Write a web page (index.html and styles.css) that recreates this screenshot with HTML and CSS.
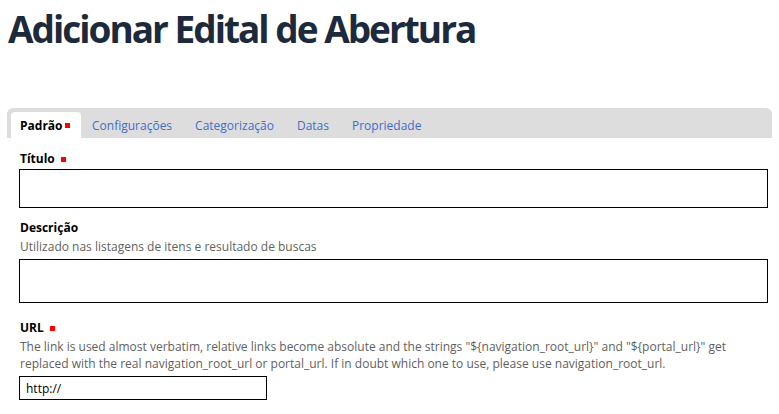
FILE: index.html
```html
<!DOCTYPE html>
<html lang="pt">
<head>
<meta charset="utf-8">
<title>Adicionar Edital de Abertura</title>
<link rel="stylesheet" href="styles.css">
</head>
<body>
<h1 class="page-title">Adicionar Edital de Abertura</h1>
<form class="edit-form">
  <nav class="tabs">
    <a class="tab active">Padrão<span class="req"></span></a>
    <a class="tab">Configurações</a>
    <a class="tab">Categorização</a>
    <a class="tab">Datas</a>
    <a class="tab">Propriedade</a>
  </nav>
  <div class="fields">
    <div class="field">
      <label class="label">Título <span class="req"></span></label>
      <input class="input title-input" type="text">
    </div>
    <div class="field field-desc">
      <label class="label">Descrição</label>
      <div class="help">Utilizado nas listagens de itens e resultado de buscas</div>
      <textarea class="input desc-input"></textarea>
    </div>
    <div class="field">
      <label class="label">URL <span class="req"></span></label>
      <div class="help">The link is used almost verbatim, relative links become absolute and the strings "${navigation_root_url}" and "${portal_url}" get replaced with the real navigation_root_url or portal_url. If in doubt which one to use, please use navigation_root_url.</div>
      <input class="input url-input" type="text" value="http://">
    </div>
  </div>
</form>
</body>
</html>
```
FILE: styles.css
```css
html, body {
  margin: 0;
  padding: 0;
  background: #fff;
}
body {
  font-family: "Open Sans", "Liberation Sans", sans-serif;
  font-size: 12px;
  color: #000;
  padding: 0 7px;
}
.page-title {
  margin: 0;
  padding: 4px 0 0 1px;
  height: 108px;
  box-sizing: border-box;
  font-size: 37px;
  line-height: 50px;
  font-weight: 700;
  color: #1c2a3b;
  letter-spacing: -2px;
  word-spacing: 0;
}
.edit-form {
  margin: 0;
}
.tabs {
  display: flex;
  align-items: flex-end;
  height: 30px;
  background: #dddddd;
  border-radius: 6px 6px 0 0;
  padding: 0 4px;
}
.tab {
  display: flex;
  align-items: center;
  height: 26px;
  padding: 0 11.5px;
  color: #3e6ecb;
  font-size: 12px;
  cursor: pointer;
}
.tab.active {
  background: #fff;
  color: #000;
  font-weight: 700;
  border-radius: 4px 4px 0 0;
  padding: 0 11px 0 9px;
}
.tab.active .req {
  margin-left: 2px;
}
.req {
  display: inline-block;
  width: 5px;
  height: 5px;
  background: #f00;
  vertical-align: 1px;
  margin-left: 3px;
}
.fields {
  padding: 12px 5px 0 12px;
}
.field {
  display: flex;
  flex-direction: column;
  align-items: flex-start;
  margin-bottom: 11px;
}
.field-desc {
  margin-bottom: 16px;
}
.label {
  font-weight: 700;
  font-size: 12px;
  line-height: 17px;
  padding-left: 1px;
  margin-bottom: 2px;
}
.help {
  color: #5f5f5f;
  font-size: 12px;
  line-height: 17px;
  padding-left: 1px;
  margin-bottom: 4px;
}
.input {
  box-sizing: border-box;
  border: 1px solid #000;
  border-radius: 0;
  margin: 0;
  font-family: "Open Sans", "Liberation Sans", sans-serif;
  font-size: 12px;
  color: #000;
  background: #fff;
}
.title-input {
  width: 749px;
  height: 39px;
}
.desc-input {
  width: 749px;
  height: 44px;
  resize: none;
}
.url-input {
  width: 248px;
  height: 24px;
  padding: 0 6px;
}
```
